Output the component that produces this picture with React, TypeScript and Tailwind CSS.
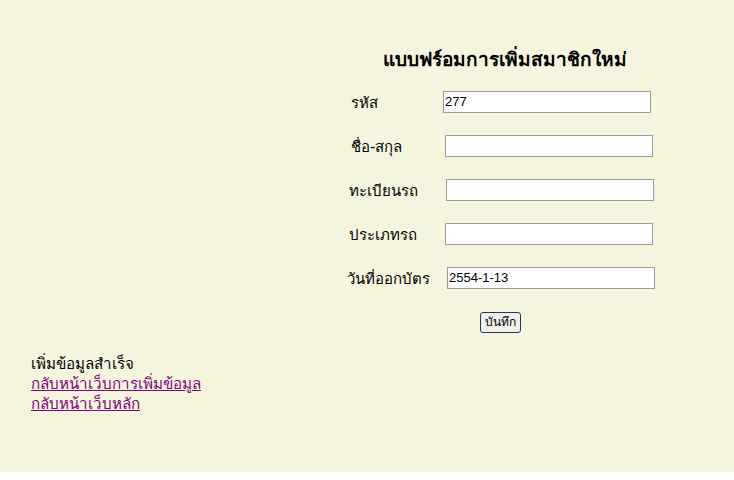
const rows = [
  { label: 'รหัส', value: '277', labelPad: 'pl-[6px]', inputPad: 'pl-0' },
  { label: 'ชื่อ-สกุล', value: '', labelPad: 'pl-[6px]', inputPad: 'pl-[2px]' },
  { label: 'ทะเบียนรถ', value: '', labelPad: 'pl-[4px]', inputPad: 'pl-[3px]' },
  { label: 'ประเภทรถ', value: '', labelPad: 'pl-[4px]', inputPad: 'pl-[2px]' },
  { label: 'วันที่ออกบัตร', value: '2554-1-13', labelPad: 'pl-[2px]', inputPad: 'pl-[4px]' },
];

export default function App() {
  return (
    <div className="bg-white">
      <div className="h-[472px] bg-[#f4f5dc] pt-[47px] font-['Tahoma','DejaVu_Sans','Noto_Sans',sans-serif] text-black">
        <div className="ml-[345px] w-[312px]">
          <h1 className="pl-[38px] text-[19px] font-bold leading-[25px]">แบบฟร์อมการเพิ่มสมาชิกใหม่</h1>
          <div className="mt-[18px] flex flex-col gap-[22px]">
            {rows.map((row) => (
              <div key={row.label} className="flex h-[22px] items-center">
                <span className={`w-[98px] shrink-0 pt-[4px] text-[15px] ${row.labelPad}`}>{row.label}</span>
                <div className={row.inputPad}>
                  <input
                    type="text"
                    defaultValue={row.value}
                    className="h-[22px] w-[208px] border border-[#9a9a9a] bg-white px-[1px] text-[13px] font-['Liberation_Sans',Arial,sans-serif] outline-none"
                  />
                </div>
              </div>
            ))}
          </div>
          <div className="mt-[21px] pl-[135px]">
            <button className="h-[21px] rounded-[3px] border border-[#1c3b5a] bg-[#f0f0ea] px-[4px] text-[12px] leading-[17px]">
              บันทึก
            </button>
          </div>
        </div>
        <div className="ml-[31px] mt-[21px] text-[15.2px] leading-[20px]">
          <div>เพิ่มข้อมูลสำเร็จ</div>
          <a href="#add" className="block text-[#800080] underline">กลับหน้าเว็บการเพิ่มข้อมูล</a>
          <a href="#home" className="block text-[#800080] underline">กลับหน้าเว็บหลัก</a>
        </div>
      </div>
    </div>
  );
}
